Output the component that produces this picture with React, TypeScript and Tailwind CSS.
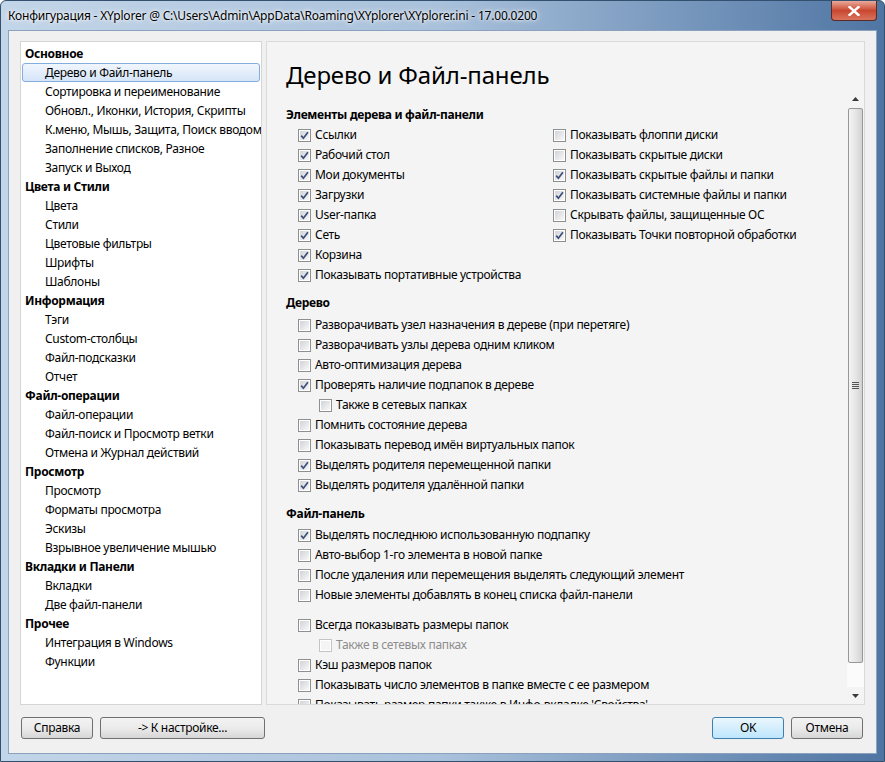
import React from "react";

type Item = { label: string; checked?: boolean; disabled?: boolean; sub?: boolean };

const tree: { title: string; items: string[] }[] = [
  {
    title: "Основное",
    items: [
      "Дерево и Файл-панель",
      "Сортировка и переименование",
      "Обновл., Иконки, История, Скрипты",
      "К.меню, Мышь, Защита, Поиск вводом",
      "Заполнение списков, Разное",
      "Запуск и Выход",
    ],
  },
  { title: "Цвета и Стили", items: ["Цвета", "Стили", "Цветовые фильтры", "Шрифты", "Шаблоны"] },
  { title: "Информация", items: ["Тэги", "Custom-столбцы", "Файл-подсказки", "Отчет"] },
  { title: "Файл-операции", items: ["Файл-операции", "Файл-поиск и Просмотр ветки", "Отмена и Журнал действий"] },
  { title: "Просмотр", items: ["Просмотр", "Форматы просмотра", "Эскизы", "Взрывное увеличение мышью"] },
  { title: "Вкладки и Панели", items: ["Вкладки", "Две файл-панели"] },
  { title: "Прочее", items: ["Интеграция в Windows", "Функции"] },
];

const leftCol: Item[] = [
  { label: "Ссылки", checked: true },
  { label: "Рабочий стол", checked: true },
  { label: "Мои документы", checked: true },
  { label: "Загрузки", checked: true },
  { label: "User-папка", checked: true },
  { label: "Сеть", checked: true },
  { label: "Корзина", checked: true },
  { label: "Показывать портативные устройства", checked: true },
];

const rightCol: Item[] = [
  { label: "Показывать флоппи диски" },
  { label: "Показывать скрытые диски" },
  { label: "Показывать скрытые файлы и папки", checked: true },
  { label: "Показывать системные файлы и папки", checked: true },
  { label: "Скрывать файлы, защищенные ОС" },
  { label: "Показывать Точки повторной обработки", checked: true },
];

const treeOpts: Item[] = [
  { label: "Разворачивать узел назначения в дереве (при перетяге)" },
  { label: "Разворачивать узлы дерева одним кликом" },
  { label: "Авто-оптимизация дерева" },
  { label: "Проверять наличие подпапок в дереве", checked: true },
  { label: "Также в сетевых папках", sub: true },
  { label: "Помнить состояние дерева" },
  { label: "Показывать перевод имён виртуальных папок" },
  { label: "Выделять родителя перемещенной папки", checked: true },
  { label: "Выделять родителя удалённой папки", checked: true },
];

const fileOpts: Item[] = [
  { label: "Выделять последнюю использованную подпапку", checked: true },
  { label: "Авто-выбор 1-го элемента в новой папке" },
  { label: "После удаления или перемещения выделять следующий элемент" },
  { label: "Новые элементы добавлять в конец списка файл-панели" },
];

const fileOpts2: Item[] = [
  { label: "Всегда показывать размеры папок" },
  { label: "Также в сетевых папках", sub: true, disabled: true },
  { label: "Кэш размеров папок" },
  { label: "Показывать число элементов в папке вместе с ее размером" },
  { label: "Показывать размер папки также в Инфо-вкладке 'Свойства'" },
];

function Box({ checked, disabled }: { checked?: boolean; disabled?: boolean }) {
  return (
    <span
      className={`flex h-[13px] w-[13px] shrink-0 items-center justify-center border bg-white p-[1px] ${
        disabled ? "border-[#c4c4c4]" : "border-[#8e8f8f]"
      }`}
    >
      <span
        className={`relative block h-full w-full ${
          disabled ? "bg-[#f4f4f4]" : "bg-gradient-to-br from-[#d0d3d8] to-[#f8f8f8]"
        }`}
      >
        {checked && (
          <svg viewBox="0 0 9 9" className="absolute inset-0 h-full w-full">
            <path d="M1.2 4.6 L3.4 7.2 L7.9 1.2" fill="none" stroke="#3d4f78" strokeWidth="1.7" />
          </svg>
        )}
      </span>
    </span>
  );
}

function Row({ item }: { item: Item }) {
  return (
    <div className={`flex h-[20px] items-center gap-[4px] ${item.sub ? "pl-[21px]" : ""}`}>
      <Box checked={item.checked} disabled={item.disabled} />
      <span className={`whitespace-nowrap ${item.disabled ? "text-[#8d8d8d]" : "text-black"}`}>{item.label}</span>
    </div>
  );
}

function Button({ children, width, primary }: { children: React.ReactNode; width: string; primary?: boolean }) {
  return (
    <div
      className={`flex h-[22px] items-center justify-center rounded-[3px] border ${width} ${
        primary
          ? "border-[#3c7fb1] bg-gradient-to-b from-[#eaf6fd] to-[#bee6fd]"
          : "border-[#707070] bg-gradient-to-b from-[#f2f2f2] via-[#ebebeb] to-[#d6d6d6]"
      }`}
    >
      {children}
    </div>
  );
}

function Scrollbar() {
  return (
    <div className="flex w-[17px] flex-col bg-[#f4f4f4]">
      <div className="flex h-[17px] items-center justify-center">
        <svg width="7" height="4" viewBox="0 0 7 4">
          <path d="M0 4 L3.5 0 L7 4 Z" fill="#3a3a3a" />
        </svg>
      </div>
      <div className="mx-[1px] mt-[1px] flex h-[555px] items-center justify-center rounded-[2px] border border-[#979797] bg-gradient-to-r from-[#f3f3f3] via-[#e6e6e6] to-[#d2d2d2]">
        <div className="flex flex-col gap-[1px]">
          <span className="block h-[1px] w-[7px] bg-[#555]" />
          <span className="block h-[1px] w-[7px] bg-[#555]" />
          <span className="block h-[1px] w-[7px] bg-[#555]" />
          <span className="block h-[1px] w-[7px] bg-[#555]" />
        </div>
      </div>
      <div className="flex-1 bg-[#fbfbfb]" />
      <div className="flex h-[17px] items-center justify-center bg-[#f4f4f4]">
        <svg width="7" height="4" viewBox="0 0 7 4">
          <path d="M0 0 L3.5 4 L7 0 Z" fill="#3a3a3a" />
        </svg>
      </div>
    </div>
  );
}

export default function App() {
  return (
    <div className="flex h-[762px] w-[885px] flex-col overflow-hidden rounded-t-[6px] border border-[#34506f] bg-gradient-to-r from-[#c3d5e8] via-[#a9c1db] to-[#4f75a3] font-['Noto_Sans',sans-serif] text-[12px] tracking-[-0.3px] text-black">
      {/* title bar */}
      <div className="flex h-[29px] shrink-0 items-start justify-between pl-[7px]">
        <span className="mt-[6px] whitespace-nowrap text-[12px] tracking-[-0.2px] [text-shadow:0_0_6px_#ffffff,0_0_3px_#ffffff]">
          Конфигурация - XYplorer @ C:\Users\Admin\AppData\Roaming\XYplorer\XYplorer.ini - 17.00.0200
        </span>
        <div className="mr-[7px] flex h-[20px] w-[46px] items-center justify-center rounded-b-[4px] border border-t-0 border-[#5a2a24] bg-gradient-to-b from-[#e9a99b] via-[#c9472f] to-[#d9735d]">
          <svg width="12" height="10" viewBox="0 0 12 10">
            <path d="M1.5 1 L10.5 9 M10.5 1 L1.5 9" stroke="#ffffff" strokeWidth="2.4" strokeLinecap="square" />
          </svg>
        </div>
      </div>

      {/* client area */}
      <div className="mx-[7px] mb-[7px] flex flex-1 flex-col border border-[#8aa2bf] bg-[#f0f0f0] px-[11px] pt-[10px]">
        <div className="flex h-[664px] gap-[4px]">
          {/* tree */}
          <div className="w-[242px] shrink-0 overflow-hidden border border-[#d5d5d5] bg-white px-[1px] pt-[2px]">
            {tree.map((g) => (
              <div key={g.title}>
                <div className="h-[19px] pl-[3px] font-bold leading-[19px]">{g.title}</div>
                {g.items.map((it, i) => {
                  const sel = g.title === "Основное" && i === 0;
                  return (
                    <div
                      key={it + i}
                      className={`h-[19px] whitespace-nowrap rounded-[3px] border pl-[22px] leading-[17px] ${
                        sel ? "border-[#84acdd] bg-gradient-to-b from-[#f1f6fd] to-[#d5e5f8]" : "border-transparent"
                      }`}
                    >
                      {it}
                    </div>
                  );
                })}
              </div>
            ))}
          </div>

          {/* right panel */}
          <div className="flex flex-1 flex-col overflow-hidden border border-[#dadada] bg-[#f4f4f4]">
            <div className="h-[48px] shrink-0 pl-[19px] pt-[18px] text-[24px] leading-[30px] tracking-[-0.15px]">
              Дерево и Файл-панель
            </div>
            <div className="flex min-h-0 flex-1">
              <div className="flex-1 overflow-hidden pl-[19px] pt-[15px]">
                <div className="h-[20px] font-bold leading-[20px]">Элементы дерева и файл-панели</div>
                <div className="flex pl-[12px]">
                  <div className="w-[255px]">
                    {leftCol.map((it) => (
                      <Row key={it.label} item={it} />
                    ))}
                  </div>
                  <div>
                    {rightCol.map((it) => (
                      <Row key={it.label} item={it} />
                    ))}
                  </div>
                </div>

                <div className="mb-[2px] mt-[8px] h-[20px] font-bold leading-[20px]">Дерево</div>
                <div className="pl-[12px]">
                  {treeOpts.map((it) => (
                    <Row key={it.label + (it.sub ? "s" : "")} item={it} />
                  ))}
                </div>

                <div className="mb-[1px] mt-[9px] h-[20px] font-bold leading-[20px]">Файл-панель</div>
                <div className="pl-[12px]">
                  {fileOpts.map((it) => (
                    <Row key={it.label} item={it} />
                  ))}
                  <div className="h-[10px]" />
                  {fileOpts2.map((it) => (
                    <Row key={it.label + (it.sub ? "s" : "")} item={it} />
                  ))}
                </div>
              </div>
              <Scrollbar />
            </div>
          </div>
        </div>

        {/* buttons */}
        <div className="mt-[12px] flex items-center pl-[1px] pr-[2px]">
          <Button width="w-[72px]">Справка</Button>
          <div className="w-[7px]" />
          <Button width="w-[165px]">-&gt; К настройке...</Button>
          <div className="flex-1" />
          <Button width="w-[72px]" primary>
            OK
          </Button>
          <div className="w-[7px]" />
          <Button width="w-[72px]">Отмена</Button>
        </div>
      </div>
    </div>
  );
}
